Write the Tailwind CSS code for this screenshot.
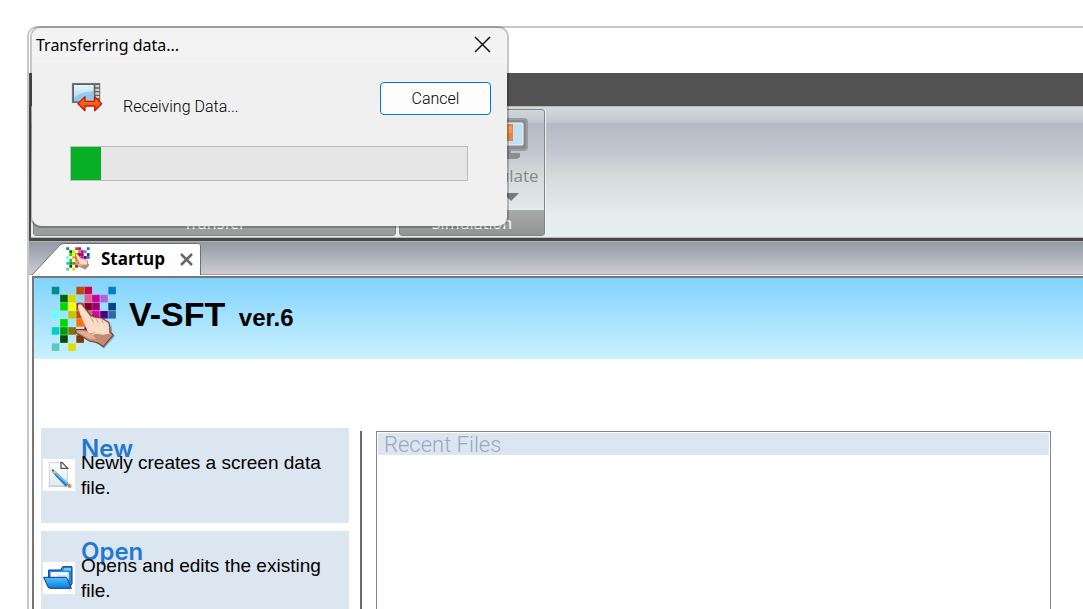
<!DOCTYPE html>
<html lang="en">
<head>
    <meta charset="UTF-8">
    <meta name="viewport" content="width=device-width, initial-scale=1.0">
    <title>V-SFT ver.6</title>
    <script src="https://cdn.jsdelivr.net/npm/@tailwindcss/browser@4"></script>
</head>
<body class="h-screen overflow-hidden bg-white pl-[27px] pt-[26px] font-['Liberation_Sans',sans-serif] text-black">

    <!-- shared V-SFT logo -->
    <svg class="hidden" aria-hidden="true">
        <symbol id="logo" viewBox="17 20 196 196">
            <g stroke="#ffffff" stroke-opacity=".35" stroke-width="1">
                <path fill="#008c8c" d="M19 22h23v23h-23z"/>
                <path fill="#b84e00" d="M92 22h23v23h-23z"/>
                <path fill="#cc004c" d="M116 22h23v23h-23z"/>
                <path fill="#0080cc" d="M187 22h23v23h-23z"/>
                <path fill="#006400" d="M44 46h23v23h-23z"/>
                <path fill="#d8d800" d="M68 46h23v23h-23z"/>
                <path fill="#e06090" d="M116 46h23v23h-23z"/>
                <path fill="#cc0099" d="M139 46h23v23h-23z"/>
                <path fill="#aa66dd" d="M163 46h23v23h-23z"/>
                <path fill="#00d800" d="M44 70h23v23h-23z"/>
                <path fill="#ffff00" d="M68 70h23v23h-23z"/>
                <path fill="#c05000" d="M92 70h23v23h-23z"/>
                <path fill="#800028" d="M116 70h23v23h-23z"/>
                <path fill="#990070" d="M139 70h23v23h-23z"/>
                <path fill="#004488" d="M187 70h23v23h-23z"/>
                <path fill="#66ffff" d="M19 94h23v23h-23z"/>
                <path fill="#c4c400" d="M68 94h23v23h-23z"/>
                <path fill="#c05000" d="M92 94h23v23h-23z"/>
                <path fill="#cc6680" d="M116 94h23v23h-23z"/>
                <path fill="#e000a0" d="M139 94h23v23h-23z"/>
                <path fill="#4b0082" d="M163 94h23v23h-23z"/>
                <path fill="#3068a0" d="M187 94h23v23h-23z"/>
                <path fill="#00d800" d="M44 118h23v23h-23z"/>
                <path fill="#ff7000" d="M92 118h23v23h-23z"/>
                <path fill="#d00060" d="M116 118h23v23h-23z"/>
                <path fill="#00d0c8" d="M19 142h23v23h-23z"/>
                <path fill="#009c00" d="M44 142h23v23h-23z"/>
                <path fill="#807800" d="M68 142h23v23h-23z"/>
                <path fill="#800040" d="M116 142h23v23h-23z"/>
                <path fill="#005000" d="M44 166h23v23h-23z"/>
                <path fill="#803800" d="M92 166h23v23h-23z"/>
                <path fill="#5cc8c0" d="M19 190h23v23h-23z"/>
                <path fill="#dddd00" d="M68 190h23v23h-23z"/>
            </g>
            <path fill="#46566a" fill-opacity=".45" d="M138 182q22 12 36 24l33-37-8-10-3-28-14 60z"/>
            <path fill="#c58a72" stroke="#6e4133" stroke-width="3" stroke-linejoin="round" d="M99 72q6-4 11 3l25 32q8 2 13 5l18 2 23 14q5 14 3 28l10 10-30 34q-8-8-20-12l-22-5-21-13-16-9q-6-6 0-12l20 0 24 4-10-22-20-32-11-19q-2-6 3-8z"/>
            <path fill="#fbdcc8" d="M101 75q4-1 8 4l25 32 15 4 17 2 20 13q5 12 3 26l3 5-20 4-20-3-18 5-8-12-22-50-7-21q-1-6 4-9z"/>
            <path fill="#e6ad95" d="M92 153q18-2 44 7l16 18-22-1-20-12z"/>
            <path fill="none" stroke="#b87964" stroke-width="2" d="M134 113l10 15M150 117l8 13M166 119l7 12M134 161q10 2 14-5"/>
        </symbol>
    </svg>

    <div class="flex h-full flex-col rounded-tl-[10px] border-l-2 border-t-2 border-[#c8c8c8]">
        <!-- title bar -->
        <div class="h-[45px] shrink-0"></div>
        <div class="h-[33px] shrink-0 bg-[#525252]"></div>

        <!-- ribbon -->
        <div class="shrink-0 border-b-3 border-l-2 border-[#484848]">
            <div class="flex h-[132px] gap-[3px] border-y border-[#b9b9b9] bg-[linear-gradient(to_bottom,#d5dae1_0,#c0c4cf_16px,#b3b9c5_16px,#c3c6d0_45px,#d6dbdc_70px,#e6eef0_110px,#e6eef0_100%)] pb-px pl-[2px] pt-[2px]">
                <section class="flex w-[363px] flex-col justify-end rounded-[3px] border border-[#858787]">
                    <h2 class="h-[25px] bg-linear-to-b from-[#a9abab] to-[#999b9b] text-center font-['Noto_Sans'] text-[16px] leading-[26px] text-white">Transfer</h2>
                </section>
                <section class="flex w-[146px] flex-col rounded-[3px] border border-[#858787] shadow-[1px_0_0_#eef1f2]">
                    <button class="flex flex-1 flex-col items-center pl-[64px] pt-[8px] font-['Open_Sans'] text-[17px] leading-[22px] text-[#85888a]">
                        <svg class="h-[42px] w-[48px]" viewBox="0 0 48 42">
                            <rect x="1" y="1" width="46" height="31" rx="3" fill="#898b8e" stroke="#9b9da1" stroke-width="2"/>
                            <rect x="5" y="5" width="38" height="22" rx="1" fill="#c4e0ee" stroke="#eef4f7"/>
                            <path fill="#e6844f" d="M17 6h16v17h-16z"/>
                            <path fill="#ee9c45" d="M27 8h5v7h-5z"/>
                            <path fill="#8b8d90" d="M20 32h11v3h9v4l-3 2h-28v-5h11z"/>
                        </svg>
                        <span class="mt-[5px]">Simulate</span>
                        <svg class="ml-[14px] mt-[6px] h-[8px] w-[16px]" viewBox="0 0 16 8"><path fill="#77797a" d="M0 0h16l-8 8z"/></svg>
                    </button>
                    <h2 class="h-[25px] bg-linear-to-b from-[#a9abab] to-[#929494] text-center font-['Noto_Sans'] text-[16px] leading-[26px] text-white">Simulation</h2>
                </section>
            </div>
        </div>

        <!-- document tabs -->
        <div class="flex h-[34px] shrink-0 items-end border-b border-t border-b-[#a0a0a0] border-t-[#b0b0b0] bg-linear-to-b from-[#929ba5] to-[#cbccd3]">
            <div class="relative -mb-px flex h-[32px] w-[172px] items-center pl-[37px]">
                <svg class="absolute inset-0 h-full w-full" viewBox="0 0 172 32" preserveAspectRatio="none" aria-hidden="true">
                    <path fill="#fff" stroke="#707070" d="M3 32L31 2Q33 .5 35 .5H169.500Q171.500 .5 171.500 3V32"/>
                </svg>
                <svg class="relative size-[24px]"><use href="#logo"/></svg>
                <span class="relative ml-[11px] font-['Open_Sans'] text-[17px] font-bold leading-[22px]">Startup</span>
                <button class="relative ml-[15px]" aria-label="Close Startup">
                    <svg class="size-[13px]" viewBox="0 0 13 13"><path fill="none" stroke="#666" stroke-width="2.500" d="M1 1l11 11M12 1L1 12"/></svg>
                </button>
            </div>
        </div>

        <!-- start page -->
        <main class="ml-[3px] mt-px flex min-h-0 flex-1 flex-col border-l-2 border-t-2 border-[#777]">
            <header class="flex h-[81px] shrink-0 items-start bg-linear-to-b from-[#80d3ff] to-[#caf1ff] pl-[17px] pt-[8px]">
                <svg class="size-[66px]"><use href="#logo"/></svg>
                <h1 class="ml-[12px] mt-[8px] text-[34px] font-bold leading-[40px]">V-SFT <span class="ml-[4px] text-[24px]">ver.6</span></h1>
            </header>

            <div class="flex min-h-0 flex-1 pl-[7px] pr-[32px] pt-[69px]">
                <nav class="flex w-[308px] shrink-0 flex-col gap-[8px]">
                    <a href="#new" class="flex h-[95px] shrink-0 gap-[6px] bg-[#dce6f0] pl-[2px]">
                        <svg class="mt-[31px] size-[32px] shrink-0 bg-white" viewBox="0 0 96 96">
                            <defs>
                                <linearGradient id="sheet" x2="0" y2="1"><stop stop-color="#fff"/><stop offset="1" stop-color="#dceaf4"/></linearGradient>
                            </defs>
                            <path fill="#d2d2d2" d="M16 81h64v3h-64z"/>
                            <path fill="url(#sheet)" stroke="#b4bcc4" stroke-width="2" d="M19 11h36l18 18v52h-54z"/>
                            <path fill="#fff" stroke="#555" stroke-width="4" d="M54 10v18h20L57 10z"/>
                            <path fill="#1686d6" stroke="#1365ab" stroke-width="2" d="M34 36l42 38-8 8-38-41z"/>
                            <path fill="#7cc8f4" d="M37 39l38 34-3 3-38-35z"/>
                            <path fill="#17202a" d="M26 31l6 2 3 6-4 3z"/>
                            <path fill="#e9c77a" d="M31 36l5-2 4 4-6 7-4-4z"/>
                            <path fill="#e17d55" d="M74 77l6-4 6 9-4 6-8-4z"/>
                        </svg>
                        <span class="pt-[8px] text-[19px] leading-[25px]">
                            <strong class="-mb-[11px] block font-['Inter'] text-[24px] font-semibold leading-[25px] text-[#1f78d1]">New</strong>
                            <span class="relative block">Newly creates a screen data file.</span>
                        </span>
                    </a>
                    <a href="#open" class="flex h-[95px] shrink-0 gap-[6px] bg-[#dce6f0] pl-[2px]">
                        <svg class="mt-[31px] size-[32px] shrink-0 bg-white" viewBox="0 0 96 96">
                            <defs>
                                <linearGradient id="folder" x2="0" y2="1"><stop stop-color="#52c2ff"/><stop offset="1" stop-color="#087bdc"/></linearGradient>
                            </defs>
                            <path fill="#218be8" stroke="#12357e" stroke-width="3" d="M17 50V24h36l6-10h28v51l-8 12z"/>
                            <path fill="#75c3ff" d="M62 18h22v8h-22z"/>
                            <path fill="#f4faff" d="M23 30h54v24h-54z"/>
                            <path fill="#cfe7f8" d="M43 38h34v12h-34z"/>
                            <path fill="url(#folder)" stroke="#12357e" stroke-width="3" stroke-linejoin="round" d="M2 46h66q3 0 5 4l12 29h-63q-5 0-7-4z"/>
                        </svg>
                        <span class="pt-[8px] text-[19px] leading-[25px]">
                            <strong class="-mb-[11px] block font-['Inter'] text-[24px] font-semibold leading-[25px] text-[#1f78d1]">Open</strong>
                            <span class="relative block">Opens and edits the existing file.</span>
                        </span>
                    </a>
                </nav>

                <div class="ml-[11px] mt-[3px] w-[2px] shrink-0 bg-[#696969]"></div>

                <section class="ml-[14px] mt-[3px] flex-1 border border-b-0 border-[#828790] p-px">
                    <h2 class="h-[22px] bg-[#dce6f0] pl-[6px] font-['Roboto'] text-[22px] font-light leading-[24px] text-[#9ba7c2]">Recent Files</h2>
                </section>
            </div>
        </main>
    </div>

    <!-- transfer dialog -->
    <div role="dialog" aria-labelledby="dialog-title" class="absolute left-[30px] top-[26px] w-[479px] overflow-hidden rounded-[11px] border-2 border-black/22 bg-[#f0f0f0] bg-clip-padding">
        <div class="flex h-[35px] items-center justify-between bg-[#f3f3f3] pb-[2px] pl-[4px] pr-[16px]">
            <h2 id="dialog-title" class="font-['Noto_Sans'] text-[16px] leading-[22px]">Transferring data...</h2>
            <button aria-label="Close">
                <svg class="size-[17px]" viewBox="0 0 17 17"><path fill="none" stroke="#111" stroke-width="1.500" d="M1 1l15 15M16 1L1 16"/></svg>
            </button>
        </div>
        <div class="flex items-start pl-[39px] pr-[16px] pt-[19px]">
            <svg class="size-[32px]" viewBox="0 0 96 96">
                <defs>
                    <linearGradient id="screen" x2="0" y2="1"><stop stop-color="#e3f6ff"/><stop offset="1" stop-color="#a5d0f0"/></linearGradient>
                    <linearGradient id="arrow" x2="0" y2="1"><stop stop-color="#ff8a1c"/><stop offset="1" stop-color="#f43a08"/></linearGradient>
                </defs>
                <path fill="#616365" stroke="#fff" stroke-width="2" d="M2 2h87v62h-87z"/>
                <path fill="url(#screen)" d="M9 9h59v49h-59z"/>
                <path fill="#82b9e5" d="M9 48q24-22 59-20v30h-59z" opacity=".6"/>
                <path fill="#d0d0d0" d="M73 9h12v7h-12zM73 20h12v7h-12zM73 31h12v7h-12zM73 42h12v7h-12z"/>
                <path fill="url(#arrow)" stroke="#c41c04" stroke-width="4" stroke-linejoin="round" d="M21 65l21-21v14h29v-14l21 21-21 21v-14h-29v14z"/>
            </svg>
            <p class="ml-[20px] mt-[15px] font-['Roboto'] text-[16px] font-light leading-[20px]">Receiving Data...</p>
            <button class="ml-auto h-[33px] w-[111px] rounded-[4px] border border-[#0078d4] bg-[#fdfdfd] font-['Roboto'] text-[16px] font-light leading-[20px]">Cancel</button>
        </div>
        <div class="mb-[45px] ml-[38px] mr-[39px] mt-[29px] h-[35px] border border-[#bcbcbc] bg-[#e6e6e6]" role="progressbar" aria-label="Receiving data" aria-valuenow="8" aria-valuemin="0" aria-valuemax="100">
            <div class="h-full bg-[#06b025]" style="width: 7.6%"></div>
        </div>
    </div>
</body>
</html>
